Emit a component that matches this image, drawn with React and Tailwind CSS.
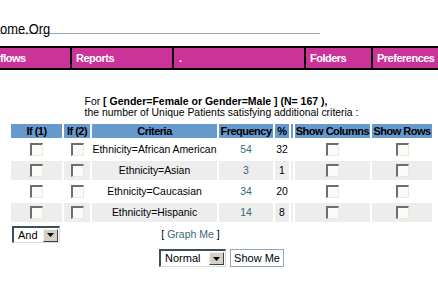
import React from "react";

const F = { fontFamily: '"Liberation Sans", Arial, sans-serif' };

function Check() {
  return (
    <div className="w-[13px] h-[13px] border-t-2 border-l-2 border-r border-b border-t-[#6e6e6e] border-l-[#6e6e6e] border-r-[#ece8e0] border-b-[#ece8e0] bg-[#fbfaf7]" />
  );
}

function DropBtn() {
  return (
    <div className="w-[15px] h-[13px] bg-[#d4d0c8] border-t border-l border-r border-b border-t-[#f4f2ee] border-l-[#f4f2ee] border-r-[#404040] border-b-[#404040] flex items-center justify-center">
      <svg width="7" height="4" viewBox="0 0 7 4">
        <path d="M0 0H7L3.5 4Z" fill="#000" />
      </svg>
    </div>
  );
}

const rows = [
  { c: "Ethnicity=African American", f: "54", p: "32", bg: "bg-white" },
  { c: "Ethnicity=Asian", f: "3", p: "1", bg: "bg-[#ededed]" },
  { c: "Ethnicity=Caucasian", f: "34", p: "20", bg: "bg-white" },
  { c: "Ethnicity=Hispanic", f: "14", p: "8", bg: "bg-[#ededed]" },
];

export default function App() {
  const hd = "h-[14px] bg-[#6699cc] flex items-center justify-center text-[11px] tracking-[-0.5px] font-bold text-black leading-[14px] whitespace-nowrap";
  const nav = "bg-[#cc3399] text-white font-bold text-[11px] tracking-[-0.5px] leading-[20px] whitespace-nowrap";
  return (
    <div style={F} className="w-[438px] h-[283px] bg-white overflow-hidden text-black">
      <div className="w-[320px] mt-[17px] h-[17px] border-b border-[#9aabb5]">
        <div className="inline-block origin-left scale-x-[0.92] text-[14px] leading-[15px] text-black whitespace-nowrap">
          ome.Org
        </div>
      </div>

      <div className="mt-[12px] h-[24px] bg-black py-[2px] flex gap-[2px]">
        <div className={`w-[70px] ${nav}`}>flows</div>
        <div className={`w-[100px] ${nav} pl-[4px]`}>Reports</div>
        <div className={`w-[130px] ${nav} pl-[5px]`}>.</div>
        <div className={`w-[65px] ${nav} pl-[4px]`}>Folders</div>
        <div className={`flex-1 ${nav} pl-[4px]`}>Preferences</div>
      </div>

      <div className="ml-[11px] w-[421px] mt-[26px] flex justify-center">
        <div className="text-[10.4px] leading-[11px] text-left whitespace-nowrap">
          <div>
            For <b className="text-[10.5px]">[ Gender=Female or Gender=Male ] (N= 167 ),</b>
          </div>
          <div>the number of Unique Patients satisfying additional criteria :</div>
        </div>
      </div>

      <div className="ml-[11px] mt-[6px] grid grid-cols-[51px_26px_125px_54px_14px_2px_75px_60px] gap-[2px] w-max">
        <div className={hd}>If (1)</div>
        <div className={hd}>If (2)</div>
        <div className={hd}>Criteria</div>
        <div className={hd}>Frequency</div>
        <div className={hd}>%</div>
        <div className={hd}></div>
        <div className={hd}>Show Columns</div>
        <div className={hd}>Show Rows</div>

        {rows.map((r, i) => (
          <React.Fragment key={i}>
            <div className={`h-[19px] ${r.bg} flex items-center justify-center`}><Check /></div>
            <div className={`h-[19px] ${r.bg} flex items-center justify-center`}><Check /></div>
            <div className={`h-[19px] ${r.bg} flex items-center justify-center text-[10.4px] whitespace-nowrap`}>{r.c}</div>
            <div className={`h-[19px] ${r.bg} flex items-center justify-center text-[10.4px] text-[#366a7b]`}>{r.f}</div>
            <div className={`h-[19px] ${r.bg} flex items-center justify-center text-[10.4px]`}>{r.p}</div>
            <div className={`h-[19px] ${r.bg}`}></div>
            <div className={`h-[19px] ${r.bg} flex items-center justify-center`}><Check /></div>
            <div className={`h-[19px] ${r.bg} flex items-center justify-center`}><Check /></div>
          </React.Fragment>
        ))}

        <div className="col-span-2 h-[21px] flex items-center pl-[1px]">
          <div className="w-[48px] h-[17px] bg-white border-t-2 border-l-2 border-r border-b border-t-[#3f4f57] border-l-[#3f4f57] border-r-[#d2dce2] border-b-[#d2dce2] flex items-center justify-between pl-[4px] pr-[1px]">
            <span className="text-[11px] leading-[13px] text-black">And</span>
            <DropBtn />
          </div>
        </div>
        <div className="col-span-3 h-[21px] flex items-center justify-center text-[10.5px] whitespace-nowrap">
          [&nbsp;<span className="text-[#366a7b]">Graph Me</span>&nbsp;]
        </div>
        <div className="col-span-3 h-[21px]"></div>
      </div>

      <div className="ml-[11px] w-[421px] mt-[4px] flex justify-center gap-[4px]">
        <div className="w-[67px] h-[18px] bg-white border-t-2 border-l-2 border-r border-b border-t-[#3f4f57] border-l-[#3f4f57] border-r-[#d2dce2] border-b-[#d2dce2] flex items-center justify-between pl-[4px] pr-[1px]">
          <span className="text-[11px] leading-[13px]">Normal</span>
          <DropBtn />
        </div>
        <div className="w-[54px] h-[18px] border border-[#8eaaba] bg-white flex items-center justify-center text-[11px] leading-[13px] whitespace-nowrap">
          Show Me
        </div>
      </div>
    </div>
  );
}
